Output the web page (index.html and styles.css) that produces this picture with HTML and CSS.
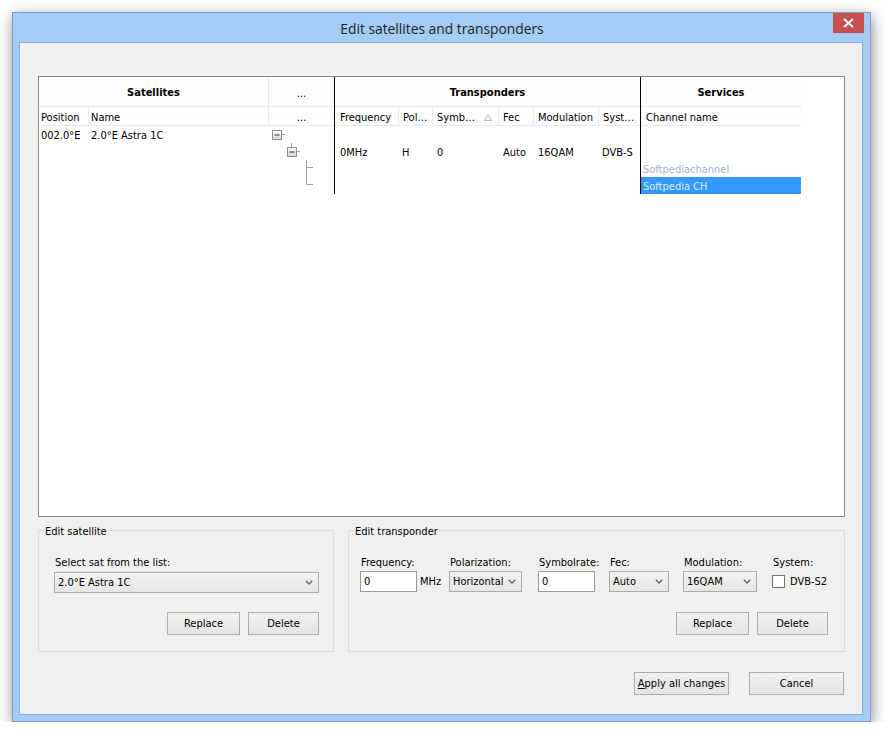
FILE: index.html
```html
<!DOCTYPE html>
<html>
<head>
<meta charset="utf-8">
<title>Edit satellites and transponders</title>
<link rel="stylesheet" href="styles.css">
</head>
<body>
<div class="window">
  <div class="titlebar"><span class="title">Edit satellites and transponders</span></div>
  <div class="close"><svg width="11" height="10" viewBox="0 0 11 10"><path d="M1 1 L10 9 M10 1 L1 9" stroke="#fff" stroke-width="1.8"/></svg></div>
  <div class="client">
    <div class="table">
      <div class="sec sat">
        <div class="hrow h1">
          <div class="hc w-satgrp">Satellites</div>
          <div class="hc w-dots nob plain">...</div>
        </div>
        <div class="hrow h2">
          <div class="hc w-pos">Position</div>
          <div class="hc w-name">Name</div>
          <div class="hc w-dots nob center">...</div>
        </div>
        <div class="body">
          <div class="bcol w-pos"><div class="brow">002.0°E</div></div>
          <div class="bcol w-name"><div class="brow">2.0°E Astra 1C</div></div>
          <div class="bcol w-dots">
            <svg class="tree" width="65" height="68" viewBox="0 0 65 68">
              <defs>
                <linearGradient id="bx" x1="0" y1="0" x2="0" y2="1">
                  <stop offset="0" stop-color="#fbfbfb"/>
                  <stop offset="1" stop-color="#d6d6d6"/>
                </linearGradient>
              </defs>
              <rect x="3.5" y="4.5" width="9" height="9" fill="url(#bx)" stroke="#8e8e8e"/>
              <path d="M5.5 9 H10.5" stroke="#2d4c90" stroke-width="1.2"/>
              <path d="M12.5 8.5 H16" stroke="#a0a0a0"/>
              <path d="M22.5 17 V21" stroke="#a0a0a0"/>
              <rect x="18.5" y="21.5" width="9" height="9" fill="url(#bx)" stroke="#8e8e8e"/>
              <path d="M20.5 26 H25.5" stroke="#2d4c90" stroke-width="1.2"/>
              <path d="M27.5 25.5 H31" stroke="#a0a0a0"/>
              <path d="M37.5 34 V58.5 M37.5 41.5 H44 M37.5 58.5 H44" stroke="#a0a0a0" fill="none"/>
            </svg>
          </div>
        </div>
      </div>
      <div class="sec tp">
        <div class="hrow h1">
          <div class="hc w-tpgrp nob">Transponders</div>
        </div>
        <div class="hrow h2">
          <div class="hc w-freq">Frequency</div>
          <div class="hc w-pol">Pol…</div>
          <div class="hc w-sym">Symb…<svg class="sort" width="8" height="7" viewBox="0 0 8 7"><path d="M0.5 6.5 L4 0.8 L7.5 6.5 Z" fill="none" stroke="#b4b4b4"/></svg></div>
          <div class="hc w-fec">Fec</div>
          <div class="hc w-mod">Modulation</div>
          <div class="hc w-sys nob">Syst…</div>
        </div>
        <div class="body">
          <div class="bcol w-freq"><div class="brow"></div><div class="brow">0MHz</div></div>
          <div class="bcol w-pol"><div class="brow"></div><div class="brow">H</div></div>
          <div class="bcol w-sym"><div class="brow"></div><div class="brow">0</div></div>
          <div class="bcol w-fec"><div class="brow"></div><div class="brow">Auto</div></div>
          <div class="bcol w-mod"><div class="brow"></div><div class="brow">16QAM</div></div>
          <div class="bcol w-sys"><div class="brow"></div><div class="brow">DVB-S</div></div>
        </div>
      </div>
      <div class="sec sv">
        <div class="hrow h1">
          <div class="hc w-sv nob">Services</div>
        </div>
        <div class="hrow h2">
          <div class="hc w-sv nob chname">Channel name</div>
        </div>
        <div class="body svbody">
          <div class="brow"></div>
          <div class="brow"></div>
          <div class="brow svrow dim">Softpediachannel</div>
          <div class="brow svrow sel">Softpedia CH</div>
        </div>
      </div>
    </div>

    <div class="groups">
      <div class="group g1">
        <div class="glabel">Edit satellite</div>
        <div class="gbody gb1">
          <div class="flabel">Select sat from the list:</div>
          <div class="combo wide"><span>2.0°E Astra 1C</span><svg class="chev" width="8" height="5" viewBox="0 0 8 5"><path d="M0.8 0.8 L4 4 L7.2 0.8" fill="none" stroke="#606060" stroke-width="1.3"/></svg></div>
          <div class="btnrow">
            <div class="btn b-rep">Replace</div>
            <div class="btn b-del">Delete</div>
          </div>
        </div>
      </div>
      <div class="group g2">
        <div class="glabel">Edit transponder</div>
        <div class="gbody gb2">
          <div class="fields">
            <div class="fcol fc-freq">
              <div class="flabel">Frequency:</div>
              <div class="ctrl"><div class="input in-freq">0</div><span class="unit">MHz</span></div>
            </div>
            <div class="fcol fc-pol">
              <div class="flabel">Polarization:</div>
              <div class="ctrl"><div class="combo cb-pol"><span>Horizontal</span><svg class="chev" width="8" height="5" viewBox="0 0 8 5"><path d="M0.8 0.8 L4 4 L7.2 0.8" fill="none" stroke="#606060" stroke-width="1.3"/></svg></div></div>
            </div>
            <div class="fcol fc-sym">
              <div class="flabel">Symbolrate:</div>
              <div class="ctrl"><div class="input in-sym">0</div></div>
            </div>
            <div class="fcol fc-fec">
              <div class="flabel">Fec:</div>
              <div class="ctrl"><div class="combo cb-fec"><span>Auto</span><svg class="chev" width="8" height="5" viewBox="0 0 8 5"><path d="M0.8 0.8 L4 4 L7.2 0.8" fill="none" stroke="#606060" stroke-width="1.3"/></svg></div></div>
            </div>
            <div class="fcol fc-mod">
              <div class="flabel">Modulation:</div>
              <div class="ctrl"><div class="combo cb-mod"><span>16QAM</span><svg class="chev" width="8" height="5" viewBox="0 0 8 5"><path d="M0.8 0.8 L4 4 L7.2 0.8" fill="none" stroke="#606060" stroke-width="1.3"/></svg></div></div>
            </div>
            <div class="fcol fc-sys">
              <div class="flabel">System:</div>
              <div class="ctrl"><div class="check"></div><span class="chklabel">DVB-S2</span></div>
            </div>
          </div>
          <div class="btnrow">
            <div class="btn b-rep">Replace</div>
            <div class="btn b-del">Delete</div>
          </div>
        </div>
      </div>
    </div>

    <div class="actions">
      <div class="btn b-act"><u>A</u>pply all changes</div>
      <div class="btn b-act">Cancel</div>
    </div>
  </div>
</div>
</body>
</html>
```

FILE: styles.css
```css
* { box-sizing: border-box; }

body {
  margin: 0;
  padding: 12px 0 0 12px;
  background: #ffffff;
  font-family: "DejaVu Sans Condensed", "Liberation Sans", sans-serif;
  font-size: 11px;
  color: #000;
}

.window {
  position: relative;
  width: 859px;
  height: 710px;
  background: #a4ccf6;
  border: 1px solid #7f9fca;
  padding: 0 7px 6px 6px;
  display: flex;
  flex-direction: column;
  box-shadow: 1px 4px 14px rgba(0, 0, 0, 0.45);
}

.titlebar {
  height: 29px;
  display: flex;
  align-items: center;
  justify-content: center;
}

.title {
  font-family: "Open Sans", "Noto Sans", sans-serif;
  font-size: 13.8px;
  color: #222;
  padding-left: 2px;
  padding-top: 1px;
}

.close {
  position: absolute;
  top: 0;
  right: 6px;
  width: 31px;
  height: 20px;
  background: #c75050;
  display: flex;
  align-items: center;
  justify-content: center;
}

.client {
  flex: 1;
  background: #f0f0f0;
  border: 1px solid #8eacd4;
  padding: 33px 17px 0 18px;
}

/* list view */
.table {
  height: 441px;
  border: 1px solid #828790;
  background: #fff;
  display: flex;
  align-items: flex-start;
}

.sec {
  display: flex;
  flex-direction: column;
}

.sat, .tp { border-right: 1px solid #000; }

.hrow {
  display: flex;
  background: #fdfdfe;
  border-bottom: 1px solid #e3ebf6;
}

.h1 { height: 30px; }
.h2 { height: 19px; }

.hc {
  display: flex;
  align-items: center;
  white-space: nowrap;
  overflow: hidden;
  border-right: 1px solid #e3ebf6;
  padding-left: 2px;
}

.h2 .hc { padding-top: 2px; }

.hc.nob { border-right: none; }

.h1 .hc {
  justify-content: center;
  font-weight: bold;
  padding-left: 0;
  padding-top: 2px;
}

.h1 .hc.plain { font-weight: normal; padding-top: 4px; }

.h2 .hc.center { justify-content: center; padding-left: 0; padding-top: 3px; }

.w-satgrp { width: 230px; }
.w-pos { width: 50px; }
.w-name { width: 180px; }
.w-dots { width: 65px; }
.w-tpgrp { width: 305px; }
.w-freq { width: 64px; }
.w-pol { width: 34px; }
.w-sym { width: 66px; }
.w-fec { width: 35px; }
.w-mod { width: 65px; }
.w-sys { width: 41px; }
.w-sv { width: 160px; }

.tp .h2 .hc { padding-left: 4px; }
.tp .h2 .w-freq { padding-left: 5px; }
.chname { padding-left: 5px; }

.sort { margin-left: auto; margin-right: 6px; }

.body {
  height: 68px;
  display: flex;
}

.bcol {
  display: flex;
  flex-direction: column;
}

.brow {
  height: 17px;
  display: flex;
  align-items: center;
  white-space: nowrap;
  padding-left: 2px;
  padding-top: 2px;
}

.tp .brow { padding-left: 5px; }
.tp .w-pol .brow { padding-left: 3px; }
.tp .w-sym .brow, .tp .w-fec .brow, .tp .w-mod .brow { padding-left: 4px; }
.tp .w-sys .brow { padding-left: 3px; }

.tree { display: block; }

.svbody {
  flex-direction: column;
  width: 160px;
}

.svrow { padding-left: 2px; height: 17px; }
.dim { color: #9fb3cc; }
.sel { background: #3399ff; color: #dce9f8; height: 17px; }

/* group boxes */
.groups {
  display: flex;
  gap: 14px;
  margin-top: 13px;
}

.group {
  height: 122px;
  border: 1px solid #dcdcdc;
}

.g1 { width: 296px; }
.g2 { width: 497px; }

.glabel {
  width: fit-content;
  margin: -6px 0 0 5px;
  padding: 0 1px;
  line-height: 14px;
  background: #f0f0f0;
}

.gb1 { padding: 17px 14px 0 15px; }
.gb2 { padding: 17px 16px 0 11px; }

.flabel {
  line-height: 14px;
  height: 14px;
  padding-left: 1px;
  white-space: nowrap;
}

.combo {
  height: 21px;
  border: 1px solid #acacac;
  background: linear-gradient(#f2f2f2, #e6e6e6);
  display: flex;
  align-items: center;
  padding: 0 5px 0 3px;
  white-space: nowrap;
}

.combo .chev { margin-left: auto; }

.combo.wide { width: 265px; margin-top: 2px; }
.cb-pol { width: 73px; }
.cb-fec { width: 60px; }
.cb-mod { width: 74px; }

.fields { display: flex; }

.fcol { display: flex; flex-direction: column; }
.fc-freq { width: 89px; }
.fc-pol { width: 89px; }
.fc-sym { width: 71px; }
.fc-fec { width: 74px; }
.fc-mod { width: 89px; }
.fc-sys { flex: 1; }

.ctrl {
  margin-top: 1px;
  height: 21px;
  display: flex;
  align-items: center;
}

.input {
  height: 21px;
  border: 1px solid #9a9a9a;
  background: #fff;
  padding-left: 3px;
  display: flex;
  align-items: center;
}

.in-freq { width: 57px; }
.in-sym { width: 57px; }

.unit { margin-left: 3px; }

.check {
  width: 13px;
  height: 13px;
  border: 1px solid #707070;
  background: #fff;
  margin-top: -1px;
}

.chklabel { margin-left: 5px; }

.btnrow {
  display: flex;
  justify-content: flex-end;
  gap: 8px;
  margin-top: 19px;
}

.gb2 .btnrow { margin-top: 20px; }

.btn {
  height: 23px;
  border: 1px solid #adadad;
  background: linear-gradient(#f0f0f0, #e5e5e5);
  display: flex;
  align-items: center;
  justify-content: center;
  white-space: nowrap;
}

.b-rep { width: 73px; }
.b-del { width: 71px; }

.actions {
  display: flex;
  justify-content: flex-end;
  gap: 20px;
  margin-top: 20px;
  padding-right: 1px;
}

.b-act { width: 95px; }
```
